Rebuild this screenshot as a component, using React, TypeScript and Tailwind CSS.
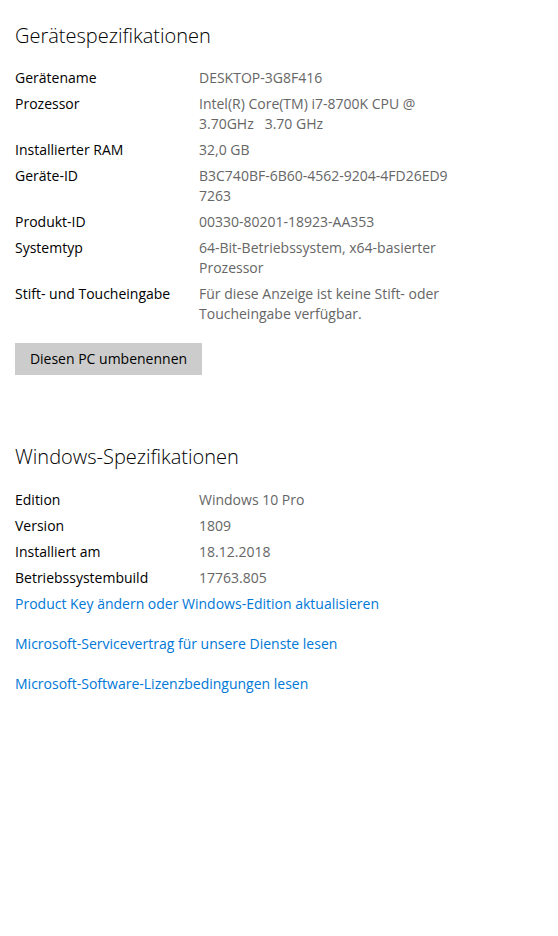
const device: { label: string; value: string[] }[] = [
  { label: "Gerätename", value: ["DESKTOP-3G8F416"] },
  { label: "Prozessor", value: ["Intel(R) Core(TM) i7-8700K CPU @", "3.70GHz   3.70 GHz"] },
  { label: "Installierter RAM", value: ["32,0 GB"] },
  { label: "Geräte-ID", value: ["B3C740BF-6B60-4562-9204-4FD26ED9", "7263"] },
  { label: "Produkt-ID", value: ["00330-80201-18923-AA353"] },
  { label: "Systemtyp", value: ["64-Bit-Betriebssystem, x64-basierter", "Prozessor"] },
  { label: "Stift- und Toucheingabe", value: ["Für diese Anzeige ist keine Stift- oder", "Toucheingabe verfügbar."] },
];

const windows: { label: string; value: string }[] = [
  { label: "Edition", value: "Windows 10 Pro" },
  { label: "Version", value: "1809" },
  { label: "Installiert am", value: "18.12.2018" },
  { label: "Betriebssystembuild", value: "17763.805" },
];

function SpecRow({ label, value }: { label: string; value: string[] }) {
  return (
    <div className="flex">
      <div className="w-[184px] shrink-0 text-black">{label}</div>
      <div className="text-[#666666] whitespace-pre">
        {value.map((line) => (
          <div key={line}>{line}</div>
        ))}
      </div>
    </div>
  );
}

export default function App() {
  return (
    <div
      className="min-h-[936px] w-[558px] bg-white px-[15px] text-[14px] leading-[20px]"
      style={{ fontFamily: '"Open Sans", "Noto Sans", sans-serif' }}
    >
      <h2 className="pt-[22px] text-[20px] leading-[28px] font-light text-black">
        Gerätespezifikationen
      </h2>

      <div className="mt-[18px] flex flex-col gap-[6px]">
        {device.map((row) => (
          <SpecRow key={row.label} label={row.label} value={row.value} />
        ))}
      </div>

      <button className="mt-[19px] h-[32px] w-[187px] bg-[#cccccc] text-black">
        Diesen PC umbenennen
      </button>

      <h2 className="mt-[68px] text-[20px] leading-[28px] font-light text-black">
        Windows-Spezifikationen
      </h2>

      <div className="mt-[19px] flex flex-col gap-[6px]">
        {windows.map((row) => (
          <SpecRow key={row.label} label={row.label} value={[row.value]} />
        ))}
      </div>

      <div className="mt-[6px] flex flex-col gap-[20px] text-[#0078d7]">
        <a href="#">Product Key ändern oder Windows-Edition aktualisieren</a>
        <a href="#">Microsoft-Servicevertrag für unsere Dienste lesen</a>
        <a href="#">Microsoft-Software-Lizenzbedingungen lesen</a>
      </div>
    </div>
  );
}
